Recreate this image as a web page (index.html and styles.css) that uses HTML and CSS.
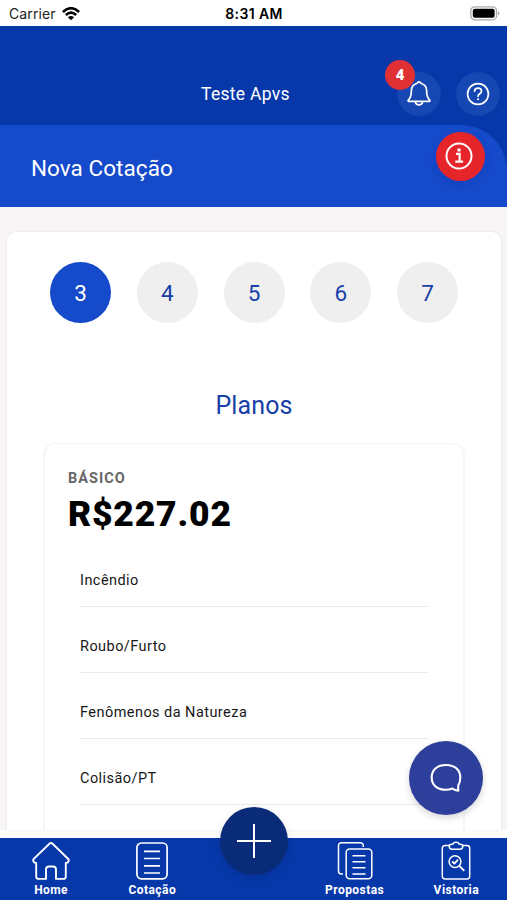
FILE: index.html
```html
<!DOCTYPE html>
<html lang="pt-BR">
<head>
<meta charset="utf-8">
<meta name="viewport" content="width=device-width, initial-scale=1">
<title>Nova Cotação</title>
<link rel="stylesheet" href="styles.css">
</head>
<body>
<div class="app">
  <div class="status">
    <div class="carrier"><span>Carrier</span>
      <svg width="18" height="14" viewBox="0 0 18 14" fill="none" stroke="#000" stroke-width="2.5"><path d="M.9 5Q9-2.6 17.1 5M3.8 8Q9 3.3 14.2 8"/><path d="M9 13.2 5.9 10.2Q9 7.7 12.1 10.2Z" fill="#000" stroke="none"/></svg>
    </div>
    <time class="clock">8:31 AM</time>
    <svg class="battery" width="31" height="15" viewBox="0 0 31 15"><rect x=".8" y=".8" width="25.7" height="13" rx="4" fill="#fff" stroke="#aaa" stroke-width="1.3"/><rect x="2.8" y="2.8" width="21.8" height="9" rx="2" fill="#000"/><path d="M28 5Q31 7.3 28 9.6Z" fill="#aaa"/></svg>
  </div>
  <header class="header">
    <div class="topbar">
      <span class="user">Teste Apvs</span>
      <div class="actions">
        <div class="round">
          <svg width="24" height="28" viewBox="0 0 24 28" fill="none" stroke="#fff" stroke-width="1.7" stroke-linecap="round" stroke-linejoin="round"><path d="M10.2 3.2a1.9 1.9 0 0 1 3.6 0C17.5 4.2 19.5 7 19.6 10.5c.1 5.5.8 7.8 3.1 9.6.4.4.2 1.3-.5 1.3H1.8c-.7 0-.9-.9-.5-1.3 2.3-1.8 3-4.1 3.1-9.6.1-3.500 2.100-6.300 5.800-7.300ZM8.200 21.600a3.900 4.200 0 0 0 7.600 0"/></svg>
          <span class="badge">4</span>
        </div>
        <div class="round">
          <svg width="24" height="24" viewBox="0 0 24 24" fill="none" stroke="#fff" stroke-width="1.700" stroke-linecap="round"><circle cx="12" cy="12" r="10.400"/><path d="M8.500 9.200c.3-4 7-4 7 0 0 2.500-3.500 2.500-3.500 5"/><circle cx="12" cy="17.200" r=".6" fill="#fff" stroke-width="1"/></svg>
        </div>
      </div>
    </div>
    <div class="band">
      <h1>Nova Cotação</h1>
      <div class="info"><svg width="28" height="28" viewBox="0 0 28 28" fill="none" stroke="#fff" stroke-width="2"><circle cx="14" cy="14" r="12.500"/><path d="M11 11.800h3.600v8M10.300 19.700h7.800" stroke-width="2.200"/><circle cx="14" cy="8" r="1.800" fill="#fff" stroke="none"/></svg></div>
    </div>
  </header>
  <main class="page">
    <section class="card">
      <div class="steps"><span class="step on">3</span><span class="step">4</span><span class="step">5</span><span class="step">6</span><span class="step">7</span></div>
      <h2>Planos</h2>
      <article class="plan">
        <div class="tier">BÁSICO</div>
        <div class="price">R$227.02</div>
        <ul class="cover">
          <li>Incêndio</li>
          <li>Roubo/Furto</li>
          <li>Fenômenos da Natureza</li>
          <li>Colisão/PT</li>
        </ul>
      </article>
    </section>
  </main>
  <nav class="nav">
    <div class="tab"><svg width="38" height="40" viewBox="0 0 38 40" fill="none" stroke="#fff" stroke-width="1.900" stroke-linejoin="round"><path d="M17.400 2.800a2.300 2.300 0 0 1 3.200 0L36 17.700c1.700 1.700.3 4.300-2.200 4.200v13.500a2.500 2.500 0 0 1-2.500 2.500H24V28.500a3 3 0 0 0-3-3h-4a3 3 0 0 0-3 3v9.400H6.700a2.500 2.500 0 0 1-2.500-2.500V21.900C1.700 22 .3 19.400 2 17.700Z"/></svg><span>Home</span></div>
    <div class="tab"><svg width="38" height="40" viewBox="0 0 38 40" fill="none" stroke="#fff" stroke-width="1.700"><rect x="3.900" y="2" width="30.200" height="35.800" rx="4.500"/><path d="M11 10.300h16M11 17.500h16M11 24.800h16M11 32h16"/></svg><span>Cotação</span></div>
    <div class="tab"></div>
    <div class="tab"><svg width="38" height="40" viewBox="0 0 38 40" fill="none" stroke="#fff" stroke-width="1.500"><path d="M7 33H5.500a3 3 0 0 1-3-3V4.700a3 3 0 0 1 3-3h18.800a3 3 0 0 1 3 3V6"/><rect x="10.200" y="7.900" width="25.600" height="29.900" rx="3.500"/><path d="M16.500 14.800h13M16.500 20.800h13M16.500 26.800h13M16.500 32.900h13"/></svg><span>Propostas</span></div>
    <div class="tab last"><svg width="38" height="40" viewBox="0 0 38 40" fill="none" stroke="#fff" stroke-width="1.500" stroke-linejoin="round"><path d="M12.300 4.500H8a2.700 2.700 0 0 0-2.700 2.700v28a2.700 2.700 0 0 0 2.700 2.700h22a2.700 2.700 0 0 0 2.700-2.700v-28A2.700 2.700 0 0 0 30 4.500h-4.300"/><path d="M12.300 5.200c0-1.200.8-1.900 2.100-1.900h1.400c1-2.600 5.400-2.600 6.400 0h1.400c1.300 0 2.100.7 2.100 1.900 0 1.800-.8 3-2.600 3h-8.200c-1.800 0-2.600-1.200-2.600-3Z"/><circle cx="18" cy="20.600" r="5.900"/><path d="m15.200 20.500 2.200 2.100 3.600-4M22.300 24.800l5 5" stroke-width="1.900"/></svg><span>Vistoria</span></div>
    <div class="plus"><svg width="36" height="36" viewBox="0 0 36 36" stroke="#fff" stroke-width="2"><path d="M18 1v34M1 18h34"/></svg></div>
  </nav>
  <div class="chat"><svg width="32" height="30" viewBox="0 0 32 30" fill="none" stroke="#fff" stroke-width="2.100" stroke-linecap="round" stroke-linejoin="round"><path d="M28.300 27.700c-.2-1.500-.2-3.500 0-5.300 1.300-1.800 2-4.500 2-7.800C30.300 6.500 24.500 2 16 2S1.700 6.500 1.700 14.500 7.500 26.800 16 26.800c2.500 0 4.500-.5 6.300-1.300 1.700 1.200 3.800 2 6 2.200Z"/></svg></div>
</div>
</body>
</html>
```
FILE: styles.css
```css
* { box-sizing: border-box; }
body { margin: 0; font-family: Roboto, "Liberation Sans", sans-serif; background: #fff; }
svg { display: block; flex: none; }
.app { position: relative; width: 507px; height: 900px; overflow: hidden; display: flex; flex-direction: column; }

.status { height: 26px; flex: none; display: grid; grid-template-columns: 1fr auto 1fr; align-items: center; padding: 1px 6px 0 9px; font-family: Inter, "Liberation Sans", sans-serif; }
.carrier { display: flex; align-items: center; gap: 6px; font-size: 14px; color: #222; letter-spacing: .1px; }
.clock { font-size: 14px; font-weight: 600; letter-spacing: .4px; margin-right: 2px; }
.battery { justify-self: end; }

.header { flex: none; height: 181px; background: #0738aa; color: #fff; display: flex; flex-direction: column; }
.topbar { height: 99px; padding: 45px 7px 0 0; display: grid; grid-template-columns: 1fr auto 1fr; align-items: start; }
.user { grid-column: 2; font-size: 17.500px; line-height: 46px; letter-spacing: .3px; margin-right: 9px; }
.actions { display: flex; justify-content: flex-end; gap: 15px; padding-top: 1px; }
.round { position: relative; width: 44px; height: 44px; border-radius: 50%; background: #1747b3; display: flex; align-items: center; justify-content: center; }
.round > svg { margin: 0 1px 1px 0; }
.badge { position: absolute; left: -12px; top: -12px; width: 30px; height: 30px; border-radius: 50%; background: #e03034; font: 900 15px/31px Roboto, sans-serif; text-align: center; }
.band { flex: 1; background: #154acb; border-top-right-radius: 46px; display: flex; justify-content: space-between; align-items: flex-start; padding: 7px 22px 0 31px; }
h1 { margin: 0; font-size: 22.500px; font-weight: 400; line-height: 72px; letter-spacing: .05px; }
.info { width: 49px; height: 49px; border-radius: 50%; background: #e6252b; display: flex; align-items: center; justify-content: center; padding: 0 3px 1px 0; box-shadow: 0 4px 8px rgba(0,30,130,.16); }

.page { height: 623px; flex: none; background: #f8f5f6; padding: 25px 6px 0 7px; }
.card { height: 598px; background: #fff; border-radius: 9px 9px 0 0; box-shadow: 0 0 3px rgba(70,40,50,.1); padding: 30px 36px 0; overflow: hidden; }
.steps { display: flex; justify-content: space-between; padding: 0 7px; }
.step { width: 61px; height: 61px; border-radius: 50%; background: #efefef; color: #1741a8; font-size: 22.500px; line-height: 62px; text-align: center; }
.step.on { background: #154acb; color: #fff; }
h2 { margin: 66px 0 0; height: 54px; text-align: center; font-size: 25px; line-height: 34px; font-weight: 400; letter-spacing: .1px; color: #1741a8; }
.plan { height: 420px; border: 1px solid #f6f6f6; border-width: 1px 2px; border-radius: 12px; padding: 25px 35px 0 23px; }
.tier { font-size: 14.500px; line-height: 20px; font-weight: 700; letter-spacing: 1px; color: #666; }
.price { font-size: 35.500px; line-height: 50px; font-weight: 900; color: #000; letter-spacing: .8px; }
.cover { list-style: none; margin: 2px 0 0 12px; padding: 0; }
.cover li { height: 66px; border-bottom: 1px solid #eaeaea; padding-top: 30px; font-size: 14.500px; line-height: 20px; color: #171717; letter-spacing: .45px; }

.nav { position: relative; flex: none; height: 62px; margin-top: 8px; background: #0738aa; padding: 3px 0 0; display: grid; grid-template-columns: repeat(5, 101.200px); color: #fff; }
.tab { display: flex; flex-direction: column; align-items: center; font-size: 12px; line-height: 19px; font-weight: 700; letter-spacing: .45px; padding-left: 1px; }
.tab.last { padding-left: 2px; }
.plus { position: absolute; left: 220px; top: -31px; width: 68px; height: 68px; border-radius: 50%; background: #0a2c78; display: flex; align-items: center; justify-content: center; box-shadow: 0 3px 8px rgba(0,0,0,.12); }
.chat { position: absolute; left: 409px; top: 741px; width: 74px; height: 74px; border-radius: 50%; background: #2d3e9b; display: flex; align-items: center; justify-content: center; box-shadow: 0 3px 7px rgba(0,0,0,.16); }
```
